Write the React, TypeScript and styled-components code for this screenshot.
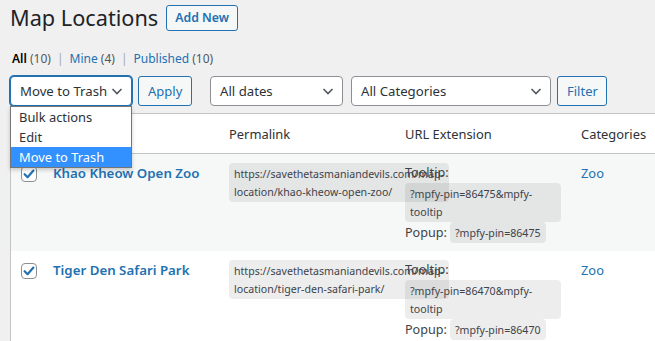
import React from "react";
import styled, { createGlobalStyle, css } from "styled-components";

const GlobalStyle = createGlobalStyle`
  html, body { margin: 0; padding: 0; background: #f0f0f1; overflow: hidden; }
  body { font-family: "Noto Sans", "Open Sans", sans-serif; color: #3c434a; font-size: 13px; }
  * { box-sizing: border-box; }
`;

const Wrap = styled.div`
  width: 760px;
  padding: 3px 0 0 10px;
  position: relative;
`;

const TitleBar = styled.div`
  display: flex;
  align-items: center;
  gap: 8px;
  height: 30px;
`;

const Title = styled.h1`
  margin: 0;
  font-size: 21.7px;
  font-weight: 400;
  line-height: 30px;
  color: #1d2327;
`;

const Button = styled.button<{ $strong?: boolean; $w?: number }>`
  height: ${(p) => (p.$strong ? 26 : 30)}px;
  padding: 0 ${(p) => (p.$strong ? 8 : 9)}px;
  border: 1px solid #2271b1;
  border-radius: 3px;
  background: #f6f7f7;
  color: #2271b1;
  font-family: inherit;
  font-size: ${(p) => (p.$strong ? 12.3 : 13)}px;
  font-weight: ${(p) => (p.$strong ? 600 : 400)};
  line-height: 1;
  cursor: pointer;
  width: ${(p) => (p.$w ? `${p.$w}px` : "auto")};
  flex: none;
`;

const Views = styled.div`
  display: flex;
  align-items: center;
  margin-top: 15px;
  height: 20px;
  padding-left: 2px;
  font-size: 12px;
  gap: 6px;
`;

const View = styled.span<{ $current?: boolean }>`
  color: ${(p) => (p.$current ? "#000" : "#2271b1")};
  font-weight: ${(p) => (p.$current ? 600 : 400)};
`;

const Count = styled.span`
  color: #50575e;
  font-weight: 400;
`;

const Sep = styled.span`
  color: #a7aaad;
`;

const Nav = styled.div`
  display: flex;
  align-items: center;
  margin-top: 8px;
  height: 30px;
`;

const Group = styled.div<{ $gap: number; $after?: number }>`
  display: flex;
  align-items: center;
  gap: ${(p) => p.$gap}px;
  margin-right: ${(p) => p.$after ?? 0}px;
  position: relative;
`;

const Select = styled.div<{ $w: number; $focus?: boolean }>`
  width: ${(p) => p.$w}px;
  height: 30px;
  display: flex;
  align-items: center;
  justify-content: space-between;
  padding: 0 7px 0 9px;
  background: #fff;
  border: 1px solid #8c8f94;
  border-radius: 4px;
  font-size: 13.2px;
  color: #2c3338;
  white-space: nowrap;
  ${(p) =>
    p.$focus &&
    css`
      border-color: #2271b1;
      box-shadow: 0 0 0 1px #2271b1;
    `}
`;

const Chevron = () => (
  <svg width="14" height="14" viewBox="0 0 14 14" aria-hidden="true">
    <path d="M2.5 5 L7 9.5 L11.5 5" fill="none" stroke="#50575e" strokeWidth="1.6" />
  </svg>
);

const Menu = styled.ul`
  position: absolute;
  left: 0;
  top: 30px;
  width: 122px;
  margin: 0;
  padding: 0;
  list-style: none;
  background: #fff;
  border: 1px solid #767676;
  box-shadow: 0 2px 4px rgba(0, 0, 0, 0.2);
  z-index: 5;
`;

const MenuItem = styled.li<{ $active?: boolean }>`
  height: 20px;
  line-height: 20px;
  padding-left: 8px;
  font-size: 12.9px;
  color: ${(p) => (p.$active ? "#fff" : "#2c3338")};
  background: ${(p) => (p.$active ? "#3390ff" : "transparent")};
`;

const Table = styled.div`
  margin-top: 7px;
  border: 1px solid #c3c4c7;
  background: #fff;
`;

const cols = "32px 176px 176px 176px 1fr";

const HeadRow = styled.div`
  display: grid;
  grid-template-columns: ${cols};
  height: 40px;
  border-bottom: 1px solid #c3c4c7;
  align-items: center;
`;

const HeadCell = styled.div`
  padding: 0 10px;
  font-size: 12.9px;
  color: #2c3338;
  white-space: nowrap;
`;

const Row = styled.div<{ $alt?: boolean }>`
  display: grid;
  grid-template-columns: ${cols};
  background: ${(p) => (p.$alt ? "#f6f7f7" : "#fff")};
`;

const Cell = styled.div<{ $check?: boolean }>`
  padding: ${(p) => (p.$check ? "12px 0 0 10px" : "9px 10px 8px")};
  font-size: 13px;
  line-height: 20px;
  min-width: 0;
`;

const Box = styled.span`
  display: inline-flex;
  align-items: center;
  justify-content: center;
  width: 16px;
  height: 16px;
  border: 1px solid #8c8f94;
  border-radius: 4px;
  background: #fff;
  vertical-align: top;
`;

const Check = () => (
  <Box>
    <svg width="14" height="14" viewBox="0 0 14 14" aria-hidden="true">
      <path d="M2.6 7.2 L5.6 10.2 L11.4 3.6" fill="none" stroke="#2271b1" strokeWidth="2.2" strokeLinecap="round" strokeLinejoin="round" />
    </svg>
  </Box>
);

const RowTitle = styled.span`
  color: #2271b1;
  font-weight: 600;
  font-size: 13.3px;
`;

const Code = styled.code<{ $block?: boolean }>`
  display: ${(p) => (p.$block ? "block" : "inline-block")};
  padding: 1.5px 5px;
  background: rgba(0, 0, 0, 0.07);
  border-radius: 4px;
  font-family: "Noto Sans", "Open Sans", sans-serif;
  font-size: 10.6px;
  line-height: 18px;
  color: #3c434a;
  vertical-align: middle;
`;

const Label = styled.div`
  color: #3c434a;
  font-size: 12.6px;
  line-height: 20px;
`;

const PopupLine = styled.div`
  display: flex;
  align-items: center;
  gap: 3px;
  font-size: 12.6px;
  color: #3c434a;
  white-space: nowrap;
  & > code {
    flex: none;
  }
`;

const CatLink = styled.span`
  color: #2271b1;
  font-size: 12.9px;
`;

const rows = [
  { title: "Khao Kheow Open Zoo", slug: "khao-kheow-open-zoo", pin: "86475" },
  { title: "Tiger Den Safari Park", slug: "tiger-den-safari-park", pin: "86470" },
];

export default function App() {
  return (
    <>
      <GlobalStyle />
      <Wrap>
        <TitleBar>
          <Title>Map Locations</Title>
          <Button $strong>Add New</Button>
        </TitleBar>
        <Views>
          <View $current>
            All <Count>(10)</Count>
          </View>
          <Sep>|</Sep>
          <View>
            Mine <Count>(4)</Count>
          </View>
          <Sep>|</Sep>
          <View>
            Published <Count>(10)</Count>
          </View>
        </Views>
        <Nav>
          <Group $gap={6} $after={18}>
            <Select $w={122} $focus>
              <span>Move to Trash</span>
              <Chevron />
            </Select>
            <Menu>
              <MenuItem>Bulk actions</MenuItem>
              <MenuItem>Edit</MenuItem>
              <MenuItem $active>Move to Trash</MenuItem>
            </Menu>
            <Button $w={54}>Apply</Button>
          </Group>
          <Group $gap={8}>
            <Select $w={133}>
              <span>All dates</span>
              <Chevron />
            </Select>
            <Select $w={200}>
              <span>All Categories</span>
              <Chevron />
            </Select>
          </Group>
          <Group $gap={0}>
            <Button $w={50} style={{ marginLeft: 6 }}>Filter</Button>
          </Group>
        </Nav>
        <Table>
          <HeadRow>
            <HeadCell>
              <Box />
            </HeadCell>
            <HeadCell>Title</HeadCell>
            <HeadCell>Permalink</HeadCell>
            <HeadCell>URL Extension</HeadCell>
            <HeadCell>Categories</HeadCell>
          </HeadRow>
          {rows.map((r, i) => (
            <Row key={r.slug} $alt={i === 0}>
              <Cell $check>
                <Check />
              </Cell>
              <Cell>
                <RowTitle>{r.title}</RowTitle>
              </Cell>
              <Cell>
                <Code>{`https://savethetasmaniandevils.com/map-location/${r.slug}/`}</Code>
              </Cell>
              <Cell>
                <Label>Tooltip:</Label>
                <Code $block>{`?mpfy-pin=${r.pin}&mpfy-tooltip`}</Code>
                <PopupLine>
                  Popup: <Code>{`?mpfy-pin=${r.pin}`}</Code>
                </PopupLine>
              </Cell>
              <Cell>
                <CatLink>Zoo</CatLink>
              </Cell>
            </Row>
          ))}
        </Table>
      </Wrap>
    </>
  );
}
